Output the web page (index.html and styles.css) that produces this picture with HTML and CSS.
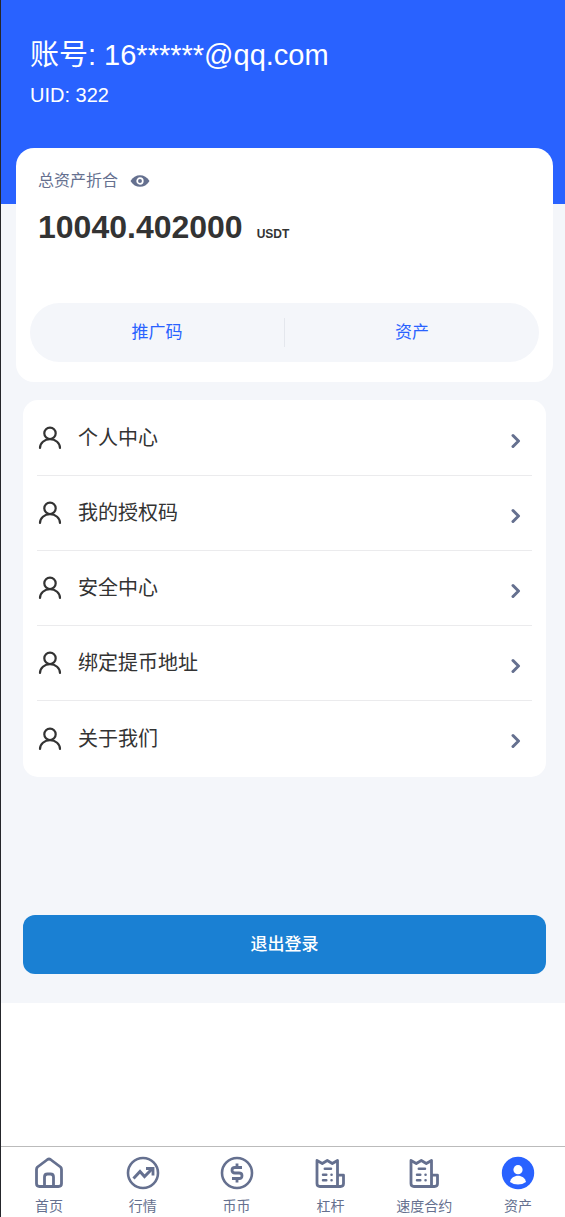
FILE: index.html
```html
<!DOCTYPE html>
<html lang="zh-CN">
<head>
<meta charset="utf-8">
<meta name="viewport" content="width=device-width, initial-scale=1">
<title>资产</title>
<link rel="stylesheet" href="styles.css">
</head>
<body>
<svg class="sprite" aria-hidden="true">
  <symbol id="user" viewBox="0 0 24 24"><g fill="none" stroke="#333" stroke-width="2.2" stroke-linecap="round"><circle cx="12" cy="7.3" r="5.7"/><path d="M2 22A10 8.800 0 0 1 22 22"/></g></symbol>
  <symbol id="chevron" viewBox="0 0 10 16"><path d="M2 2.500L7.500 8L2 13.500" fill="none" stroke="#65708f" stroke-width="3" stroke-linecap="round" stroke-linejoin="round"/></symbol>
  <symbol id="receipt" viewBox="0 0 34 34"><g fill="none" stroke="#65708f" stroke-width="2.800" stroke-linejoin="round" stroke-linecap="round"><path d="M24.500 30.500H7Q4 30.500 4 27.500V4.500L9.300 7.500L14.300 4.500L19.300 7.500L24.500 4.500V30.500H27.500Q30.500 30.500 30.500 27.500V19.200H24.500"/><path d="M11.800 12.800H18M10 18.700H13.300M18.500 18.700H18.600M10 24.300H13.300M18.500 24.300H18.600" stroke-width="2.500"/></g></symbol>
</svg>
<div class="page">
  <header class="hero">
    <h1 class="account">账号: 16******@qq.com</h1>
    <p class="uid">UID: 322</p>
  </header>
  <main class="content">
    <section class="wallet">
      <div class="wallet-label">
        <span>总资产折合</span>
        <button class="eye" type="button" aria-label="显示或隐藏资产">
          <svg width="20" height="14" viewBox="0 0 20 14"><path d="M.5 7C5-.8 15-.8 19.500 7C15 14.800 5 14.800.5 7Z" fill="#65708f"/><circle cx="10" cy="7" r="2.800" fill="#65708f" stroke="#fff" stroke-width="1.700"/></svg>
        </button>
      </div>
      <p class="balance"><strong>10040.402000</strong><span class="unit">USDT</span></p>
      <div class="shortcuts">
        <a class="shortcut" href="#promo">推广码</a>
        <a class="shortcut" href="#assets">资产</a>
      </div>
    </section>
    <nav class="menu">
      <a class="row" href="#profile"><svg class="row-icon"><use href="#user"/></svg><span class="row-text">个人中心</span><svg class="chevron"><use href="#chevron"/></svg></a>
      <a class="row" href="#code"><svg class="row-icon"><use href="#user"/></svg><span class="row-text">我的授权码</span><svg class="chevron"><use href="#chevron"/></svg></a>
      <a class="row" href="#security"><svg class="row-icon"><use href="#user"/></svg><span class="row-text">安全中心</span><svg class="chevron"><use href="#chevron"/></svg></a>
      <a class="row" href="#address"><svg class="row-icon"><use href="#user"/></svg><span class="row-text">绑定提币地址</span><svg class="chevron"><use href="#chevron"/></svg></a>
      <a class="row" href="#about"><svg class="row-icon"><use href="#user"/></svg><span class="row-text">关于我们</span><svg class="chevron"><use href="#chevron"/></svg></a>
    </nav>
    <button class="logout" type="button">退出登录</button>
  </main>
  <nav class="tabs">
    <a class="tab" href="#home">
      <svg class="tab-icon" viewBox="0 0 34 34"><g fill="none" stroke="#65708f" stroke-width="2.800" stroke-linejoin="round"><path d="M4.500 13.500Q4.500 12 5.500 11L15.500 3.500Q17 2.500 18.500 3.500L28.500 11Q29.500 12 29.500 13.500V27.500Q29.500 30.500 26.500 30.500H7.500Q4.500 30.500 4.500 27.500Z"/><path d="M12.500 30.500V21Q12.500 18 15.500 18H18.500Q21.500 18 21.500 21V30.500"/></g></svg>
      <span>首页</span></a>
    <a class="tab" href="#market">
      <svg class="tab-icon" viewBox="0 0 34 34"><g fill="none" stroke="#65708f"><circle cx="17" cy="17" r="15" stroke-width="2.600"/><path d="M7.500 22.500L14 15.500L18.500 20.500L26 13" stroke-width="3"/><path d="M20 12.500H27V19.500" stroke-width="2.800"/></g></svg>
      <span>行情</span></a>
    <a class="tab" href="#spot">
      <svg class="tab-icon" viewBox="0 0 34 34"><g fill="none" stroke="#65708f"><circle cx="17" cy="17" r="15" stroke-width="2.600"/><path d="M22 11.500H15Q12 11.500 12 14.200T15 17H19Q22 17 22 19.800T19 22.500H12M17 7.500V11.500M17 22.500V26.500" stroke-width="2.800"/></g></svg>
      <span>币币</span></a>
    <a class="tab" href="#margin"><svg class="tab-icon"><use href="#receipt"/></svg><span>杠杆</span></a>
    <a class="tab" href="#contract"><svg class="tab-icon"><use href="#receipt"/></svg><span>速度合约</span></a>
    <a class="tab" href="#assets" aria-current="page">
      <svg class="tab-icon" viewBox="0 0 34 34"><circle cx="17" cy="17" r="16.200" fill="#2962ff"/><circle cx="17" cy="13.700" r="4.600" fill="#fff"/><path d="M9 26C10.500 17.500 23.500 17.500 25 26Q21.500 28.500 17 28.500T9 26Z" fill="#fff"/></svg>
      <span>资产</span></a>
  </nav>
</div>
</body>
</html>
```
FILE: styles.css
```css
* { box-sizing: border-box; }
body {
  margin: 0;
  background: #fff;
  color: #333;
  font-family: "Liberation Sans", "Noto Sans CJK SC", sans-serif;
}
h1, p { margin: 0; }
a { color: inherit; text-decoration: none; }
button { font: inherit; border: 0; cursor: pointer; }
.sprite { display: none; }
.page {
  display: flex;
  flex-direction: column;
  min-height: 100vh;
  border-left: 1px solid #25262b;
}
.hero {
  padding: 35px 29px 94px;
  background: #2962ff;
  color: #fff;
}
.account { font-size: 29px; line-height: 40px; font-weight: 400; }
.uid { margin-top: 5px; font-size: 20px; line-height: 30px; }
.content {
  display: flex;
  flex-direction: column;
  padding: 0 19px 29px 22px;
  background: #f4f6fa;
}
.wallet {
  margin: -56px -7px 0;
  padding: 21px 14px 20px;
  border-radius: 18px;
  background: #fff;
}
.wallet-label {
  display: flex;
  align-items: center;
  gap: 12px;
  padding: 0 8px;
  font-size: 16px;
  line-height: 24px;
  color: #65708f;
}
.eye { display: flex; padding: 0; background: none; }
.balance {
  display: flex;
  align-items: baseline;
  gap: 14px;
  padding: 14px 8px 0;
  font-size: 32px;
  line-height: 40px;
}
.unit { font-size: 12px; font-weight: 700; }
.shortcuts {
  display: flex;
  margin-top: 49px;
  padding: 15px 0;
  border-radius: 30px;
  background: #f4f6fa;
  color: #2962ff;
  font-size: 17px;
  line-height: 29px;
}
.shortcut { flex: 1; text-align: center; }
.shortcut + .shortcut { border-left: 1px solid #e4e7ed; }
.menu {
  margin-top: 18px;
  padding: 1px 14px;
  border-radius: 15px;
  background: #fff;
}
.row {
  display: flex;
  align-items: center;
  height: 75px;
  padding: 0 11px 0 1px;
  border-bottom: 1px solid #ebebed;
  font-size: 20px;
  line-height: 30px;
}
.row:last-child { border-bottom: 0; }
.row-icon { width: 24px; height: 24px; }
.row-text { flex: 1; padding-left: 16px; }
.chevron { width: 10px; height: 16px; margin-top: 5px; }
.logout {
  margin-top: 138px;
  padding: 15px;
  border-radius: 12px;
  background: #1a80d3;
  color: #fff;
  font-size: 17px;
  font-weight: 500;
  line-height: 29px;
}
.tabs {
  display: flex;
  margin-top: auto;
  padding-left: 1px;
  border-top: 1px solid #bbb;
  background: #fff;
}
.tab {
  display: flex;
  flex: 1;
  flex-direction: column;
  align-items: center;
  gap: 5px;
  padding: 9px 0 0;
  font-size: 14px;
  line-height: 22px;
  color: #65708f;
}
.tab-icon { width: 34px; height: 34px; }
```
